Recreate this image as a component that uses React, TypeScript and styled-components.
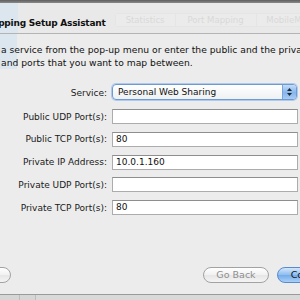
import React from "react";
import styled, { createGlobalStyle } from "styled-components";

const GlobalStyle = createGlobalStyle`
  html, body { margin: 0; padding: 0; background: #ececec; }
  body { font-family: "DejaVu Sans", "Liberation Sans", sans-serif; overflow: hidden; }
`;

const Frame = styled.div`
  width: 300px;
  height: 300px;
  overflow: hidden;
  display: flex;
  flex-direction: column;
  background: #ececec;
  color: #111;
`;

const TopEdge = styled.div`
  height: 3px;
  flex: none;
  background: linear-gradient(#5e5e5e, #8a8a8a);
`;

const Upper = styled.div`
  background: linear-gradient(to right, #dce6ee 0, #dce6ee 18px, #e9e9e9 18px);
  display: flex;
  flex-direction: column;
`;

const Header = styled.div`
  height: 30px;
  display: flex;
  align-items: flex-start;
  gap: 9px;
`;

const Title = styled.div`
  margin-left: -40px;
  padding-top: 14px;
  font-weight: bold;
  font-size: 9px;
  letter-spacing: -0.22px;
  line-height: 12px;
  white-space: nowrap;
  color: #111;
`;

const GhostTabs = styled.div`
  display: flex;
  margin-top: 10px;
  height: 12px;
  border: 1px solid #e5e5e5;
  border-radius: 3px;
  white-space: nowrap;
`;

const GhostTab = styled.div<{ $w: number }>`
  width: ${(p) => p.$w}px;
  flex: none;
  font-size: 8.5px;
  line-height: 12px;
  text-align: center;
  color: #d9d9d9;
  background: #ebebeb;
  border-right: 1px solid #e5e5e5;
`;

const Separator = styled.div`
  height: 1px;
  background: #b4b4b4;
  box-shadow: 0 1px 0 #f6f6f6;
`;

const Description = styled.div`
  padding: 9px 0 0 1px;
  font-size: 9.2px;
  line-height: 13px;
  white-space: nowrap;
  background: linear-gradient(to right, #dce6ee 0, #dce6ee 17px, #ececec 17px);
  height: 26px;
`;

const Form = styled.div`
  margin-top: 15px;
  display: grid;
  grid-template-columns: 107px 186px;
  column-gap: 5px;
  row-gap: 7.75px;
  align-items: center;
`;

const Label = styled.div`
  font-size: 9px;
  text-align: right;
  white-space: nowrap;
  color: #1a1a1a;
`;

const Popup = styled.div`
  height: 16px;
  box-sizing: border-box;
  margin-bottom: 1.25px;
  display: flex;
  border: 1px solid #6f9bd3;
  border-radius: 4px;
  box-shadow: 0 0 0 1px #aecbee;
  background: linear-gradient(#ffffff, #eef0f2);
  overflow: hidden;
  width: 185px;
`;

const PopupText = styled.div`
  flex: 1;
  padding-left: 5px;
  font-size: 9px;
  line-height: 14px;
  white-space: nowrap;
`;

const PopupArrows = styled.div`
  width: 13px;
  flex: none;
  background: linear-gradient(#c4dcf6, #86b5ec 55%, #a9cbf2);
  border-left: 1px solid #7aa3d8;
  display: flex;
  align-items: center;
  justify-content: center;
`;

const Field = styled.div`
  height: 15px;
  box-sizing: border-box;
  border: 1px solid #acacac;
  border-top-color: #8e8e8e;
  background: #fff;
  padding-left: 3px;
  font-size: 9px;
  line-height: 13px;
  color: #111;
`;

const ButtonRow = styled.div`
  margin-top: 52px;
  display: flex;
  align-items: center;
  height: 16px;
`;

const Button = styled.div<{ $w: number; $primary?: boolean; $disabled?: boolean }>`
  width: ${(p) => p.$w}px;
  flex: none;
  height: 16px;
  box-sizing: border-box;
  border-radius: 8px;
  border: 1px solid ${(p) => (p.$primary ? "#5a8acb" : "#a2a2a2")};
  background: ${(p) =>
    p.$primary
      ? "linear-gradient(#d3e6fa, #8dbdf0 50%, #73abec 51%, #a9d0f6)"
      : "linear-gradient(#ffffff, #f1f1f1 50%, #e6e6e6 51%, #f4f4f4)"};
  font-size: 9.5px;
  line-height: 14px;
  text-align: center;
  white-space: nowrap;
  color: ${(p) => (p.$disabled ? "#8e8e8e" : "#111")};
`;

const LeftButton = styled(Button)`
  margin-left: -49px;
`;

const GoBack = styled(Button)`
  margin-left: auto;
`;

const Continue = styled(Button)`
  margin-left: 8px;
  margin-right: -47px;
`;

const BottomEdge = styled.div`
  margin-top: auto;
  height: 5px;
  flex: none;
  border-top: 1px solid #9a9a9a;
  background: linear-gradient(to right, #d6d6d6 0 19px, #bdbdbd 19px 20px, #d6d6d6 20px 35px, #bdbdbd 35px 36px, #d9d9d9 36px);
`;

const Arrows = () => (
  <svg width="7" height="10" viewBox="0 0 7 10">
    <path d="M3.5 1 L6 4 L1 4 Z" fill="#1d2a3a" />
    <path d="M3.5 9 L6 6 L1 6 Z" fill="#1d2a3a" />
  </svg>
);

const rows: { label: string; value: string }[] = [
  { label: "Public UDP Port(s):", value: "" },
  { label: "Public TCP Port(s):", value: "80" },
  { label: "Private IP Address:", value: "10.0.1.160" },
  { label: "Private UDP Port(s):", value: "" },
  { label: "Private TCP Port(s):", value: "80" },
];

export default function App() {
  return (
    <>
      <GlobalStyle />
      <Frame>
        <TopEdge />
        <Upper>
          <Header>
            <Title>Port Mapping Setup Assistant</Title>
            <GhostTabs>
              <GhostTab $w={59}>Statistics</GhostTab>
              <GhostTab $w={80}>Port Mapping</GhostTab>
              <GhostTab $w={60}>MobileMe</GhostTab>
            </GhostTabs>
          </Header>
          <Separator />
        </Upper>
        <Description>
          <div>a service from the pop-up menu or enter the public and the private IP addresses</div>
          <div>and ports that you want to map between.</div>
        </Description>
        <Form>
          <Label>Service:</Label>
          <Popup>
            <PopupText>Personal Web Sharing</PopupText>
            <PopupArrows>
              <Arrows />
            </PopupArrows>
          </Popup>
          {rows.map((r) => (
            <React.Fragment key={r.label}>
              <Label>{r.label}</Label>
              <Field>{r.value}</Field>
            </React.Fragment>
          ))}
        </Form>
        <ButtonRow>
          <LeftButton $w={60}>Cancel</LeftButton>
          <GoBack $w={66} $disabled>
            Go Back
          </GoBack>
          <Continue $w={70} $primary>
            Continue
          </Continue>
        </ButtonRow>
        <BottomEdge />
      </Frame>
    </>
  );
}
